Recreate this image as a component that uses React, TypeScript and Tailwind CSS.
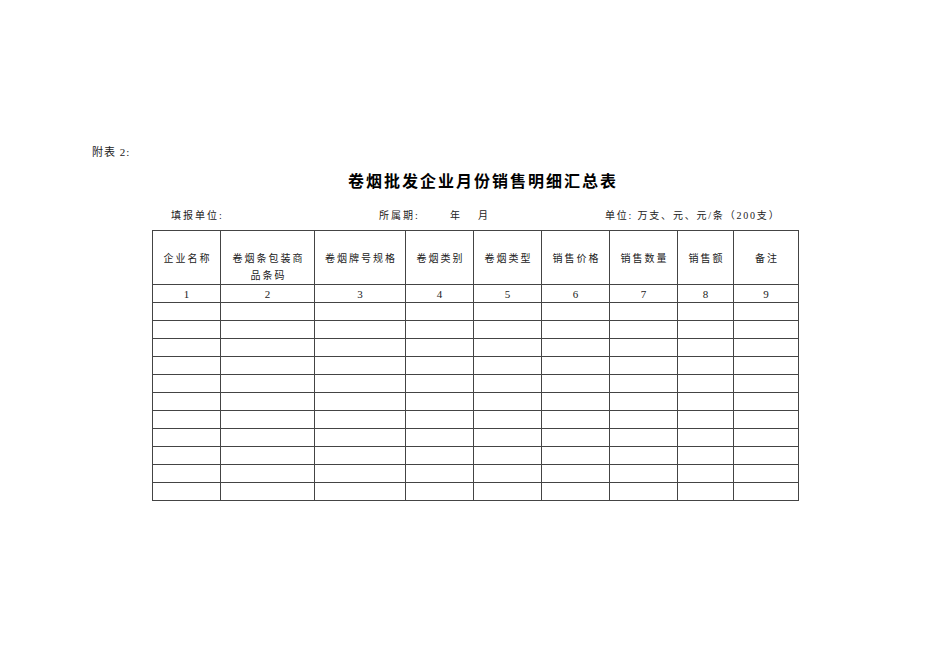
import React from 'react'

const COLS = [68, 94, 91, 68, 68, 68, 68, 56, 65]

const HEADERS: React.ReactNode[] = [
  '企业名称',
  <>卷烟条包装商<br />品条码</>,
  '卷烟牌号规格',
  '卷烟类别',
  '卷烟类型',
  '销售价格',
  '销售数量',
  '销售额',
  '备注',
]

const EMPTY_ROWS = Array.from({ length: 11 }, (_, i) => i)

export default function App() {
  return (
    <div
      className="w-[950px] h-[672px] bg-white text-[#222] overflow-hidden"
      style={{ fontFamily: '"Liberation Serif", "Noto Sans CJK SC", serif' }}
    >
      {/* attachment label */}
      <div className="pt-[144px] pl-[92px] text-[11px] leading-[16px] tracking-[1px]">附表 2:</div>

      {/* title */}
      <div className="mt-[8px] pl-[348px]">
        <div
          className="text-[16px] leading-[24px] font-bold tracking-[2px] text-black whitespace-nowrap"
          style={{ fontFamily: '"Noto Sans CJK SC", sans-serif' }}
        >
          卷烟批发企业月份销售明细汇总表
        </div>
      </div>

      {/* meta line */}
      <div className="mt-[17px] pl-[171px] flex text-[10px] leading-[14px] tracking-[2px] whitespace-nowrap">
        <span className="w-[208px]">填报单位:</span>
        <span className="w-[71px]">所属期:</span>
        <span className="w-[28px]">年</span>
        <span className="w-[127px]">月</span>
        <span className="tracking-[1.8px]">单位: 万支、元、元/条（200支）</span>
      </div>

      {/* table */}
      <table className="mt-[7px] ml-[152px] w-[647px] table-fixed border-collapse">
        <colgroup>
          {COLS.map((w, i) => (
            <col key={i} style={{ width: w }} />
          ))}
        </colgroup>
        <tbody>
          <tr>
            {HEADERS.map((h, i) => (
              <td
                key={i}
                className="h-[54px] border border-[#444] align-top pt-[19px] pl-[2px] text-center text-[10px] leading-[17px] tracking-[2px]"
              >
                {h}
              </td>
            ))}
          </tr>
          <tr>
            {COLS.map((_, i) => (
              <td key={i} className="h-[18px] p-0 border border-[#444] text-center text-[11px] leading-[16px]">
                {i + 1}
              </td>
            ))}
          </tr>
          {EMPTY_ROWS.map((r) => (
            <tr key={r}>
              {COLS.map((_, i) => (
                <td key={i} className="h-[18px] p-0 border border-[#444]" />
              ))}
            </tr>
          ))}
        </tbody>
      </table>
    </div>
  )
}
